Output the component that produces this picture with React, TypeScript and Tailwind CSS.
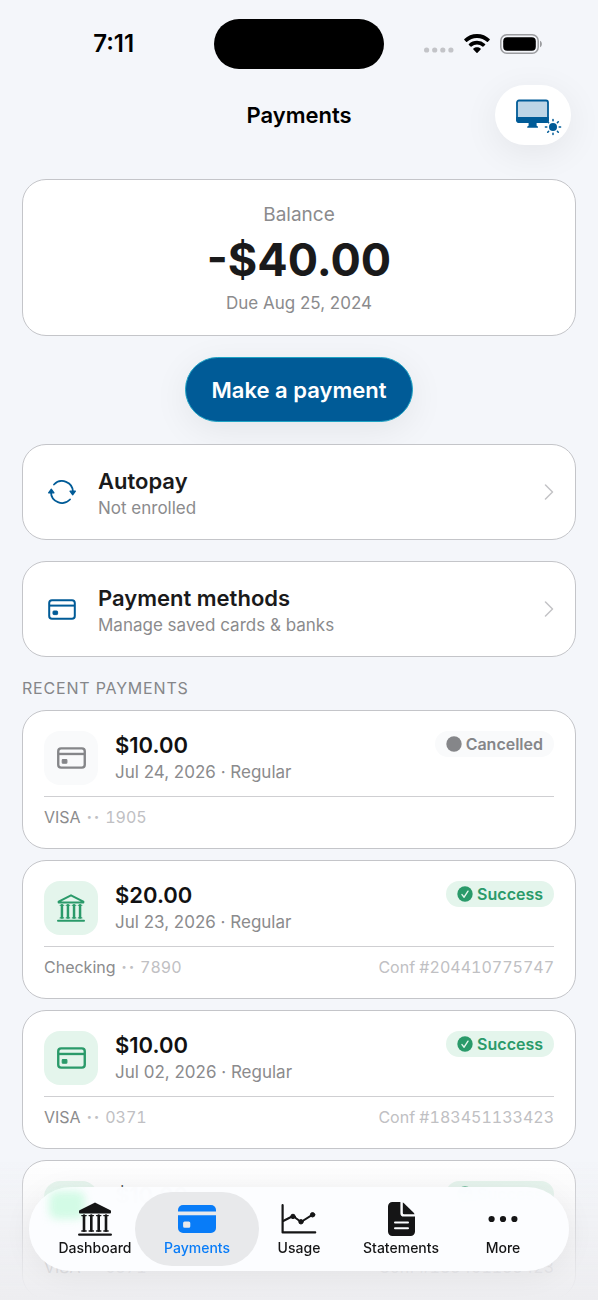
import { ReactNode } from "react";
import clsx from "clsx";

type Payment = {
  amount: string;
  date: string;
  status: "Success" | "Cancelled";
  method: "VISA" | "Checking";
  last4: string;
  confirmation?: string;
};

const payments: Payment[] = [
  {
    amount: "$10.00",
    date: "Jul 24, 2026",
    status: "Cancelled",
    method: "VISA",
    last4: "1905",
  },
  {
    amount: "$20.00",
    date: "Jul 23, 2026",
    status: "Success",
    method: "Checking",
    last4: "7890",
    confirmation: "204410775747",
  },
  {
    amount: "$10.00",
    date: "Jul 02, 2026",
    status: "Success",
    method: "VISA",
    last4: "0371",
    confirmation: "183451133423",
  },
  {
    amount: "$10.00",
    date: "Jul 02, 2026",
    status: "Success",
    method: "VISA",
    last4: "0371",
    confirmation: "183451133423",
  },
];

function CardIcon({ className, stroke = 2.3 }: { className?: string; stroke?: number }) {
  return (
    <svg viewBox="0 0 28 21" fill="none" stroke="currentColor" strokeWidth={stroke} className={className}>
      <rect x="1.2" y="1.2" width="25.6" height="18.6" rx="2.8" />
      <path d="M1 6.6h26" />
      <rect x="5" y="12" width="4.6" height="3.6" rx="0.8" fill="currentColor" strokeWidth="1" />
    </svg>
  );
}

function CardFilledIcon() {
  return (
    <svg viewBox="0 0 38 28" fill="currentColor" className="h-7 w-[38px]">
      <path d="M0 6.6V5a5 5 0 0 1 5-5h28a5 5 0 0 1 5 5v1.6z" />
      <path
        fillRule="evenodd"
        d="M0 10.3h38V23a5 5 0 0 1-5 5H5a5 5 0 0 1-5-5zM6.6 16.4a1.5 1.5 0 0 0-1.5 1.5v3.4a1.5 1.5 0 0 0 1.5 1.5h4.2a1.5 1.5 0 0 0 1.5-1.5v-3.4a1.5 1.5 0 0 0-1.5-1.5z"
      />
    </svg>
  );
}

function BankIcon({ className, filled = false }: { className?: string; filled?: boolean }) {
  return (
    <svg viewBox="0 0 34 34" fill="none" stroke="currentColor" strokeLinecap="round" strokeLinejoin="round" className={className}>
      <path
        d="M2 9.2 17 1.6l15 7.6v1.2H2z"
        strokeWidth={filled ? 2 : 2.4}
        fill={filled ? "currentColor" : "none"}
      />
      <path d="M6 13.6v15M13.3 13.6v15M20.7 13.6v15M28 13.6v15" strokeWidth={filled ? 2.6 : 3} />
      <path
        d="M3.8 13.6h4.4M11.1 13.6h4.4M18.5 13.6h4.4M25.8 13.6h4.4M3.8 29h4.4M11.1 29h4.4M18.5 29h4.4M25.8 29h4.4"
        strokeWidth="1.3"
      />
      <path d="M1.2 32.6h31.6" strokeWidth="2.4" />
    </svg>
  );
}

function AutopayIcon() {
  return (
    <svg viewBox="0 0 28 24" fill="none" stroke="currentColor" strokeWidth="1.8" strokeLinecap="round" className="h-6 w-7">
      <path d="M6 4.5A11 11 0 0 1 25 12" />
      <path d="M22 19.5A11 11 0 0 1 3 12" />
      <path d="M22 11.2h5.400l-2.700 3.600zM.6 12.800H6L3.300 9.200z" fill="currentColor" strokeWidth="1.2" strokeLinejoin="round" />
    </svg>
  );
}

function ChevronIcon() {
  return (
    <svg viewBox="0 0 10 16" fill="none" stroke="currentColor" strokeWidth="1.5" strokeLinecap="round" strokeLinejoin="round" className="h-4 w-[10px] text-[#c3c3c6]">
      <path d="m1.5 1 7 7-7 7" />
    </svg>
  );
}

function UsageIcon() {
  return (
    <svg viewBox="0 0 36 30" fill="none" stroke="currentColor" strokeWidth="2.2" strokeLinecap="round" strokeLinejoin="round" className="h-[30px] w-9">
      <path d="M1.6 1.2v27.2h32.6" />
      <path d="m2.2 17 9.800-5 8 6 11.600-7.400" strokeWidth="2" />
      <circle cx="12" cy="12.4" r="2.2" fill="currentColor" strokeWidth="1" />
      <circle cx="20" cy="17.8" r="2.2" fill="currentColor" strokeWidth="1" />
      <circle cx="31.6" cy="10.8" r="2.2" fill="currentColor" strokeWidth="1" />
    </svg>
  );
}

function StatementIcon() {
  return (
    <svg viewBox="0 0 27 34" fill="currentColor" className="h-[34px] w-[27px]">
      <path
        fillRule="evenodd"
        d="M4.4 0h8v11.2a3.4 3.4 0 0 0 3.4 3.4H27v15a4.4 4.4 0 0 1-4.4 4.4H4.4A4.4 4.4 0 0 1 0 29.6V4.4A4.4 4.4 0 0 1 4.4 0zM7 19.4a1 1 0 0 0 0 2h13a1 1 0 0 0 0-2zM7 25.2a1 1 0 0 0 0 2h13a1 1 0 0 0 0-2z"
      />
      <path d="M14.8.6a2 2 0 0 1 .9.5l10 9.7c.4.4.6.8.8 1.4h-10.400a1.300 1.300 0 0 1-1.300-1.300z" />
    </svg>
  );
}

function MoreIcon() {
  return (
    <svg viewBox="0 0 30 8" fill="currentColor" className="h-2 w-[30px]">
      <circle cx="3.6" cy="4" r="3.1" />
      <circle cx="15" cy="4" r="3.1" />
      <circle cx="26.4" cy="4" r="3.1" />
    </svg>
  );
}

function ThemeIcon() {
  return (
    <svg viewBox="0 0 46 38" fill="none" className="h-[38px] w-[46px] text-[#005b97]">
      <rect x="1" y="1.5" width="31" height="21.5" rx="2" fill="#bed5e6" stroke="currentColor" strokeWidth="1.8" />
      <path d="M.2 18h32.6v3.6a2.4 2.4 0 0 1-2.4 2.4H2.6A2.4 2.4 0 0 1 .2 21.6z" fill="currentColor" />
      <path d="M12.6 24h8v2.8c1 .2 1.4.7 1.4 1.9H11.2c0-1.2.4-1.7 1.4-1.9z" fill="currentColor" />
      <circle cx="37" cy="28" r="4" fill="currentColor" />
      <path
        d="M37 20.4v1.4M37 34.2v1.4M29.4 28h1.4M43.2 28h1.4M31.7 22.7l.9.9M41.4 32.4l.9.9M31.7 33.3l.9-.9M41.4 23.6l.9-.9"
        stroke="currentColor"
        strokeWidth="1.5"
        strokeLinecap="round"
      />
    </svg>
  );
}

function StatusBar() {
  return (
    <div className="grid h-20 grid-cols-3 items-center pt-2 text-black">
      <span className="pl-7 text-center text-[24px] font-semibold leading-7">7:11</span>
      <div className="mx-auto h-[50px] w-[170px] rounded-full bg-black" />
      <div className="flex items-center justify-end gap-[10px] pr-14">
        <svg viewBox="0 0 30 20" className="h-5 w-[30px]" fill="#c3c4c8">
          <circle cx="2.6" cy="16" r="2.6" />
          <circle cx="10.7" cy="16" r="2.6" />
          <circle cx="18.8" cy="16" r="2.6" />
          <circle cx="26.9" cy="16" r="2.6" />
        </svg>
        <svg viewBox="0 0 26 20" fill="currentColor" className="h-5 w-[26px]">
          <path d="M13 0C8 0 3.6 1.9.4 5a.7.7 0 0 0 0 1l1.7 1.7c.3.3.7.3 1 0A14.2 14.2 0 0 1 13 3.9c3.8 0 7.3 1.4 9.9 3.8.3.3.7.3 1 0L25.6 6a.7.7 0 0 0 0-1C22.4 1.9 18 0 13 0z" />
          <path d="M13 6.8c-3.1 0-6 1.2-8.1 3.1a.7.7 0 0 0 0 1l1.7 1.7c.3.3.7.3 1 0a8 8 0 0 1 10.8 0c.3.3.7.3 1 0l1.7-1.7a.7.7 0 0 0 0-1A12 12 0 0 0 13 6.8z" />
          <path d="M13 13.3c-1.4 0-2.7.5-3.6 1.3a.7.7 0 0 0 0 1l3.1 3.1c.3.3.7.3 1 0l3.1-3.1a.7.7 0 0 0 0-1c-.9-.8-2.2-1.3-3.6-1.3z" />
        </svg>
        <svg viewBox="0 0 42 20" className="h-5 w-[42px]">
          <rect x=".8" y=".8" width="37.4" height="18.4" rx="6" fill="none" stroke="#9b9c9f" strokeWidth="1.5" />
          <rect x="3.2" y="3.2" width="32.6" height="13.6" rx="4" fill="#000" />
          <path d="M40 6.8c1.2.6 1.9 1.8 1.9 3.2s-.7 2.6-1.9 3.2z" fill="#9b9c9f" />
        </svg>
      </div>
    </div>
  );
}

function Header() {
  return (
    <header className="grid h-[70px] grid-cols-[1fr_auto_1fr] items-center pr-[27px]">
      <h1 className="col-start-2 pl-[27px] text-[22px] font-semibold leading-7 text-black">
        Payments
      </h1>
      <button
        aria-label="Change theme"
        className="flex h-[60px] w-[76px] items-center justify-center justify-self-end rounded-full bg-white pl-3 pt-[6px] shadow-[0_8px_36px_rgba(0,0,0,0.07)]"
      >
        <ThemeIcon />
      </button>
    </header>
  );
}

function LinkCard({ icon, title, subtitle }: { icon: ReactNode; title: string; subtitle: string }) {
  return (
    <a
      href="#"
      className="flex h-24 items-center rounded-3xl border border-[#c4c5c9] bg-white px-[25px]"
    >
      <span className="w-7 text-[#005b97]">{icon}</span>
      <span className="ml-[22px] flex-1 pt-[3px]">
        <span className="block text-[22px] font-semibold leading-7 text-[#1a1a1b]">{title}</span>
        <span className="block text-[17px] leading-[26px] text-[#8b8b8d]">{subtitle}</span>
      </span>
      <span className="-mr-1">
        <ChevronIcon />
      </span>
    </a>
  );
}

function StatusBadge({ status }: { status: Payment["status"] }) {
  const success = status === "Success";
  return (
    <span
      className={clsx(
        "flex h-[26px] items-center gap-1 rounded-full px-[11px] text-[16px] font-semibold leading-5",
        success ? "bg-[#e4f5ec] text-[#2a9a6a]" : "bg-[#f9fafb] text-[#858689]"
      )}
    >
      <svg viewBox="0 0 16 16" className="size-4">
        <circle cx="8" cy="8" r="7.7" fill="currentColor" />
        {success && (
          <path d="m5 8.6 2.1 2.600L11 5.200" fill="none" stroke="#e4f5ec" strokeWidth="1.4" strokeLinecap="round" strokeLinejoin="round" />
        )}
      </svg>
      {status}
    </span>
  );
}

function PaymentCard({ payment }: { payment: Payment }) {
  return (
    <li className="h-[139px] rounded-3xl border border-[#c4c5c9] bg-white px-[21px] pt-5">
      <div className="flex h-[66px] items-start border-b border-[#cfcfd2]">
        <div
          className={clsx(
            "flex size-[54px] items-center justify-center rounded-2xl",
            payment.status === "Success" ? "bg-[#e4f5ec] text-[#2a9a6a]" : "bg-[#f9fafb] text-[#858689]"
          )}
        >
          {payment.method === "VISA" ? (
            <CardIcon className="h-[22px] w-[29px]" />
          ) : (
            <BankIcon className="size-7" />
          )}
        </div>
        <div className="ml-[17px] flex-1">
          <p className="text-[22px] font-semibold leading-7 text-[#111112]">{payment.amount}</p>
          <p className="text-[17px] leading-[26px] text-[#8b8b8d]">{payment.date} · Regular</p>
        </div>
        <StatusBadge status={payment.status} />
      </div>
      <div className="mt-[9px] flex items-center justify-between text-[16px] leading-[22px] tabular-nums text-[#c0c0c3]">
        <p className="flex items-center">
          <span className="text-[#8b8b8d]">{payment.method}</span>
          <span className="mx-[6px] text-[9px]">• •</span>
          {payment.last4}
        </p>
        {payment.confirmation && <p>Conf #{payment.confirmation}</p>}
      </div>
    </li>
  );
}

const tabs = [
  { label: "Dashboard", icon: <BankIcon filled className="size-[34px]" /> },
  { label: "Payments", icon: <CardFilledIcon /> },
  { label: "Usage", icon: <UsageIcon /> },
  { label: "Statements", icon: <StatementIcon /> },
  { label: "More", icon: <MoreIcon /> },
];

function TabBar({ active }: { active: string }) {
  return (
    <div className="fixed inset-x-0 bottom-0 bg-linear-to-b from-[#ededf0]/0 via-[#ededf0]/60 to-[#ededf0] px-[29px] pb-[29px] pt-7">
      <nav className="relative grid h-[84px] grid-cols-5 rounded-full bg-[#fcfdff]/98 px-[15px] py-[5px] shadow-[0_4px_30px_rgba(0,0,0,0.06)] backdrop-blur-md">
        {/* green glow of the card icon behind the glass */}
        <span className="absolute left-5 top-1 h-7 w-9 rounded-lg bg-[#d3fbe6] blur-xs" />
        {tabs.map(({ label, icon }) => (
          <button
            key={label}
            className={clsx("relative", label === active ? "text-[#087cf8]" : "text-[#151516]")}
          >
            {label === active && (
              <span className="absolute -inset-x-[11px] inset-y-0 rounded-full bg-[#e8e9eb]" />
            )}
            <span className="relative flex h-full flex-col items-center pt-[10px]">
              <span className="flex h-[34px] items-center">{icon}</span>
              <span className="mt-1 text-[14px] font-medium leading-4">{label}</span>
            </span>
          </button>
        ))}
      </nav>
    </div>
  );
}

export default function App() {
  return (
    <div className="min-h-screen bg-[#f4f6fa] font-['Inter',sans-serif]">
      <StatusBar />
      <Header />
      <main className="px-[22px] pt-[29px]">
        <section className="flex h-[157px] flex-col items-center rounded-3xl border border-[#c4c5c9] bg-white pt-[21px] text-[#8b8b8d]">
          <h2 className="text-[19px] leading-7">Balance</h2>
          <p className="text-[45px] font-bold leading-[62px] text-[#1a1a1b]">-$40.00</p>
          <p className="text-[17px] leading-6">Due Aug 25, 2024</p>
        </section>

        <button className="mx-auto mt-[21px] block h-[65px] w-[228px] rounded-full border border-[#1fa3c4] bg-[#005b97] pt-0.5 text-[22px] font-semibold text-white shadow-[0_8px_36px_rgba(0,0,0,0.07)]">
          Make a payment
        </button>

        <div className="mt-[22px] flex flex-col gap-[21px]">
          <LinkCard icon={<AutopayIcon />} title="Autopay" subtitle="Not enrolled" />
          <LinkCard
            icon={<CardIcon className="h-[21px] w-7" stroke={2} />}
            title="Payment methods"
            subtitle="Manage saved cards & banks"
          />
        </div>

        <h2 className="mt-[19px] text-[16px] leading-6 tracking-wider text-[#858689]">
          RECENT PAYMENTS
        </h2>
        <ul className="mt-[10px] flex flex-col gap-[11px]">
          {payments.map((payment, index) => (
            <PaymentCard key={index} payment={payment} />
          ))}
        </ul>
      </main>
      <TabBar active="Payments" />
    </div>
  );
}
